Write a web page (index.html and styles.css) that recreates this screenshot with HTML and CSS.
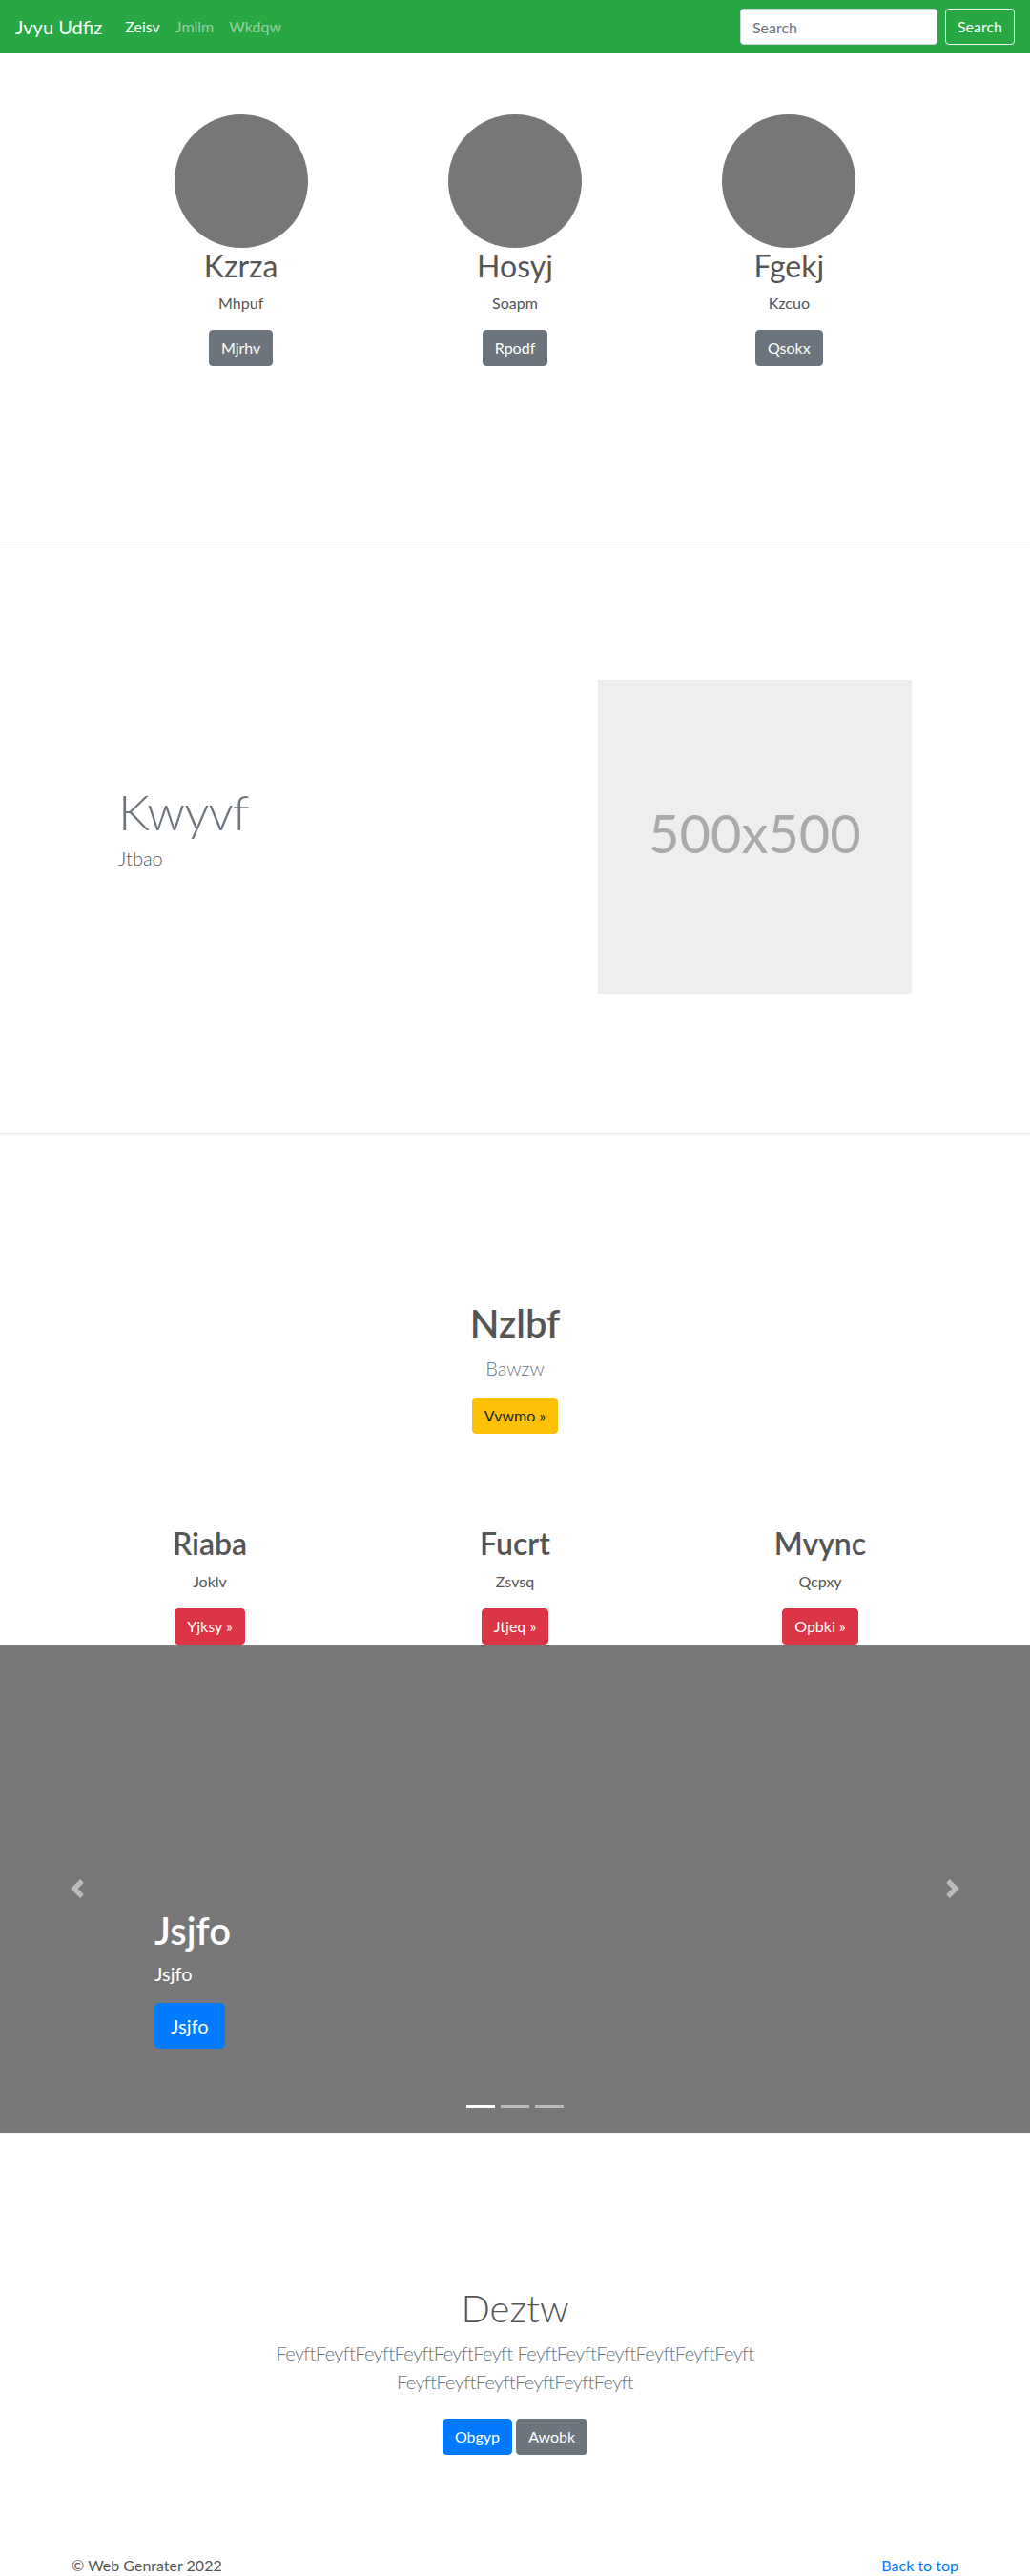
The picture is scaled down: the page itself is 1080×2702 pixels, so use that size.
FILE: index.html
```html
<!DOCTYPE html>
<html lang="en">
<head>
<meta charset="utf-8">
<title>Jvyu Udfiz</title>
<link rel="stylesheet" href="styles.css">
</head>
<body>
<nav class="navbar">
  <a class="brand" href="#">Jvyu Udfiz</a>
  <ul class="nav-links">
    <li><a class="nav-link active" href="#">Zeisv</a></li>
    <li><a class="nav-link" href="#">Jmllm</a></li>
    <li><a class="nav-link" href="#">Wkdqw</a></li>
  </ul>
  <form class="search-form">
    <input class="search-input" type="text" placeholder="Search">
    <button class="btn btn-outline-light" type="button">Search</button>
  </form>
</nav>

<section class="marketing">
  <div class="narrow-row three-col">
    <div class="marketing-col">
      <div class="avatar"></div>
      <h2>Kzrza</h2>
      <p>Mhpuf</p>
      <div><a class="btn btn-secondary" href="#">Mjrhv</a></div>
    </div>
    <div class="marketing-col">
      <div class="avatar"></div>
      <h2>Hosyj</h2>
      <p>Soapm</p>
      <div><a class="btn btn-secondary" href="#">Rpodf</a></div>
    </div>
    <div class="marketing-col">
      <div class="avatar"></div>
      <h2>Fgekj</h2>
      <p>Kzcuo</p>
      <div><a class="btn btn-secondary" href="#">Qsokx</a></div>
    </div>
  </div>
</section>

<hr class="divider">

<section class="featurette">
  <div class="narrow-row featurette-row">
    <div class="featurette-text">
      <h2 class="featurette-heading">Kwyvf</h2>
      <p class="lead">Jtbao</p>
    </div>
    <div class="featurette-media">
      <div class="placeholder">500x500</div>
    </div>
  </div>
</section>

<hr class="divider">

<section class="hero">
  <div class="container">
    <h1 class="hero-title">Nzlbf</h1>
    <p class="lead muted">Bawzw</p>
    <div><a class="btn btn-warning" href="#">Vvwmo &raquo;</a></div>
    <div class="three-col feature-row">
      <div class="feature-col">
        <h2>Riaba</h2>
        <p>Joklv</p>
        <div><a class="btn btn-danger" href="#">Yjksy &raquo;</a></div>
      </div>
      <div class="feature-col">
        <h2>Fucrt</h2>
        <p>Zsvsq</p>
        <div><a class="btn btn-danger" href="#">Jtjeq &raquo;</a></div>
      </div>
      <div class="feature-col">
        <h2>Mvync</h2>
        <p>Qcpxy</p>
        <div><a class="btn btn-danger" href="#">Opbki &raquo;</a></div>
      </div>
    </div>
  </div>
</section>

<div class="carousel">
  <ol class="carousel-indicators">
    <li class="active"></li>
    <li></li>
    <li></li>
  </ol>
  <div class="carousel-caption">
    <h1>Jsjfo</h1>
    <p class="caption-text">Jsjfo</p>
    <p class="caption-action"><a class="btn btn-lg btn-primary" href="#">Jsjfo</a></p>
  </div>
  <a class="carousel-control prev" href="#">
    <svg viewBox="0 0 8 8" width="20" height="20"><path fill="#fff" d="M5.25 0l-4 4 4 4 1.5-1.5L4.25 4l2.5-2.5L5.25 0z"/></svg>
  </a>
  <a class="carousel-control next" href="#">
    <svg viewBox="0 0 8 8" width="20" height="20"><path fill="#fff" d="M2.75 0l-1.5 1.5L3.75 4l-2.5 2.5L2.75 8l4-4-4-4z"/></svg>
  </a>
</div>

<section class="album-hero">
  <div class="album-container">
    <h1 class="album-title">Deztw</h1>
    <p class="lead muted album-lead">FeyftFeyftFeyftFeyftFeyftFeyft FeyftFeyftFeyftFeyftFeyftFeyft FeyftFeyftFeyftFeyftFeyftFeyft</p>
    <p class="album-actions"><a class="btn btn-primary" href="#">Obgyp</a> <a class="btn btn-secondary" href="#">Awobk</a></p>
  </div>
</section>

<footer class="footer">
  <div class="container footer-row">
    <p>&copy; Web Genrater 2022</p>
    <p><a class="link" href="#">Back to top</a></p>
  </div>
</footer>
</body>
</html>
```

FILE: styles.css
```css
* {
  box-sizing: border-box;
}

html,
body {
  margin: 0;
  padding: 0;
}

body {
  font-family: "Lato", "Open Sans", "Liberation Sans", sans-serif;
  font-size: 16px;
  line-height: 1.5;
  color: #555;
  background: #fff;
}

a {
  text-decoration: none;
}

h1,
h2,
p {
  margin: 0;
}

/* ---------- navbar ---------- */
.navbar {
  display: flex;
  align-items: center;
  height: 56px;
  padding: 8px 16px;
  background: #28a745;
}

.brand {
  font-size: 20px;
  line-height: 30px;
  padding: 5px 0;
  margin-right: 16px;
  color: #fff;
}

.nav-links {
  display: flex;
  list-style: none;
  margin: 0;
  padding: 0;
}

.nav-link {
  display: block;
  padding: 8px;
  color: rgba(255, 255, 255, 0.5);
}

.nav-link.active {
  color: #fff;
}

.search-form {
  margin-left: auto;
  display: flex;
  align-items: center;
}

.search-input {
  width: 207px;
  height: 38px;
  padding: 6px 12px;
  margin: 0 8px 0 0;
  font-family: inherit;
  font-size: 16px;
  line-height: 24px;
  color: #495057;
  background: #fff;
  border: 1px solid #ced4da;
  border-radius: 4px;
}

.search-input::placeholder {
  color: #6c757d;
}

/* ---------- buttons ---------- */
.btn {
  display: inline-block;
  font-family: inherit;
  font-size: 16px;
  font-weight: 400;
  line-height: 24px;
  padding: 6px 12px;
  border: 1px solid transparent;
  border-radius: 4px;
  text-align: center;
  vertical-align: middle;
  cursor: pointer;
}

.btn-outline-light {
  color: #f8f9fa;
  background: transparent;
  border-color: #f8f9fa;
}

.btn-secondary {
  color: #fff;
  background: #6c757d;
  border-color: #6c757d;
}

.btn-warning {
  color: #212529;
  background: #ffc107;
  border-color: #ffc107;
}

.btn-danger {
  color: #fff;
  background: #dc3545;
  border-color: #dc3545;
}

.btn-primary {
  color: #fff;
  background: #007bff;
  border-color: #007bff;
}

.btn-lg {
  font-size: 20px;
  line-height: 30px;
  padding: 8px 16px;
  border-radius: 5px;
}

/* ---------- shared ---------- */
.container {
  width: 960px;
  margin: 0 auto;
  padding: 0 15px;
}

.narrow-row {
  width: 862px;
  margin: 0 auto;
}

.three-col {
  display: grid;
  grid-template-columns: repeat(3, 1fr);
}

.lead {
  font-size: 20px;
  font-weight: 300;
  line-height: 30px;
}

.muted {
  color: #6c757d;
}

.divider {
  margin: 0;
  height: 0;
  border: 0;
  border-top: 1px solid rgba(0, 0, 0, 0.1);
}

/* ---------- marketing ---------- */
.marketing {
  padding: 64px 0 160px;
}

.marketing-col {
  text-align: center;
  padding: 0 15px;
  margin-bottom: 24px;
}

.avatar {
  width: 140px;
  height: 140px;
  margin: 0 auto;
  border-radius: 50%;
  background: #777;
}

.marketing-col h2 {
  font-size: 32px;
  font-weight: 400;
  line-height: 1.2;
  margin-bottom: 8px;
  color: #555;
}

.marketing-col p {
  margin: 0 12px 16px;
}

/* ---------- featurette ---------- */
.featurette {
  padding: 144px 0 145px;
}

.featurette-row {
  display: flex;
}

.featurette-text {
  flex: 0 0 58.3333%;
  padding: 0 15px;
}

.featurette-media {
  flex: 0 0 41.6667%;
  padding: 0 15px;
}

.featurette-heading {
  margin-top: 112px;
  margin-bottom: 8px;
  font-size: 52px;
  font-weight: 300;
  line-height: 1;
  letter-spacing: -0.8px;
  color: #6c757d;
}

.featurette-text .lead {
  color: #555;
}

.placeholder {
  height: 330px;
  padding-bottom: 9px;
  display: flex;
  align-items: center;
  justify-content: center;
  background: #eee;
  color: #aaa;
  font-size: 56px;
  line-height: 1;
}

/* ---------- hero ---------- */
.hero {
  padding-top: 175px;
  text-align: center;
}

.hero-title {
  font-size: 40px;
  font-weight: 600;
  line-height: 1.2;
  margin-bottom: 8px;
  color: #555;
}

.hero .lead {
  margin-bottom: 16px;
}

.feature-row {
  margin: 96px -15px 0;
}

.feature-col {
  padding: 0 15px;
}

.feature-col h2 {
  font-size: 32px;
  font-weight: 600;
  line-height: 1.2;
  margin-bottom: 8px;
  color: #555;
}

.feature-col p {
  margin-bottom: 16px;
}

/* ---------- carousel ---------- */
.carousel {
  position: relative;
  height: 512px;
  background: #777;
  overflow: hidden;
}

.carousel-caption {
  position: absolute;
  left: 15%;
  right: 15%;
  bottom: 48px;
  padding: 20px 0;
  color: #fff;
  text-align: left;
  z-index: 10;
}

.carousel-caption h1 {
  font-size: 40px;
  font-weight: 600;
  line-height: 1.2;
  margin-bottom: 6px;
}

.caption-text {
  font-size: 20px;
  line-height: 30px;
  margin-bottom: 16px;
}

.caption-action {
  font-size: 20px;
  line-height: 30px;
  margin: 4px 0 20px;
}

.carousel-control {
  position: absolute;
  top: 0;
  bottom: 0;
  width: 15%;
  display: flex;
  align-items: center;
  justify-content: center;
  opacity: 0.5;
  z-index: 5;
}

.carousel-control.prev {
  left: 0;
}

.carousel-control.next {
  right: 0;
}

.carousel-control svg {
  display: block;
  width: 20px;
  height: 20px;
}

.carousel-indicators {
  position: absolute;
  left: 15%;
  right: 15%;
  bottom: 0;
  margin: 0 0 16px;
  padding: 0;
  list-style: none;
  display: flex;
  justify-content: center;
  z-index: 15;
}

.carousel-indicators li {
  box-sizing: content-box;
  width: 30px;
  height: 3px;
  margin: 0 3px;
  background-color: #fff;
  background-clip: padding-box;
  border-top: 10px solid transparent;
  border-bottom: 10px solid transparent;
  opacity: 0.5;
}

.carousel-indicators li.active {
  opacity: 1;
}

/* ---------- album hero ---------- */
.album-hero {
  padding: 160px 0 48px;
  text-align: center;
}

.album-container {
  max-width: 640px;
  margin: 0 auto;
  padding: 0 15px;
}

.album-title {
  font-size: 40px;
  font-weight: 300;
  line-height: 1.2;
  margin-bottom: 8px;
  color: #555;
}

.album-lead {
  margin-bottom: 16px;
  letter-spacing: -0.6px;
}

.album-actions .btn {
  margin: 8px 0;
}

/* ---------- footer ---------- */
.footer {
  padding: 48px 0;
  color: #555;
}

.footer-row {
  display: flex;
  justify-content: space-between;
}

.link {
  color: #007bff;
}
```
